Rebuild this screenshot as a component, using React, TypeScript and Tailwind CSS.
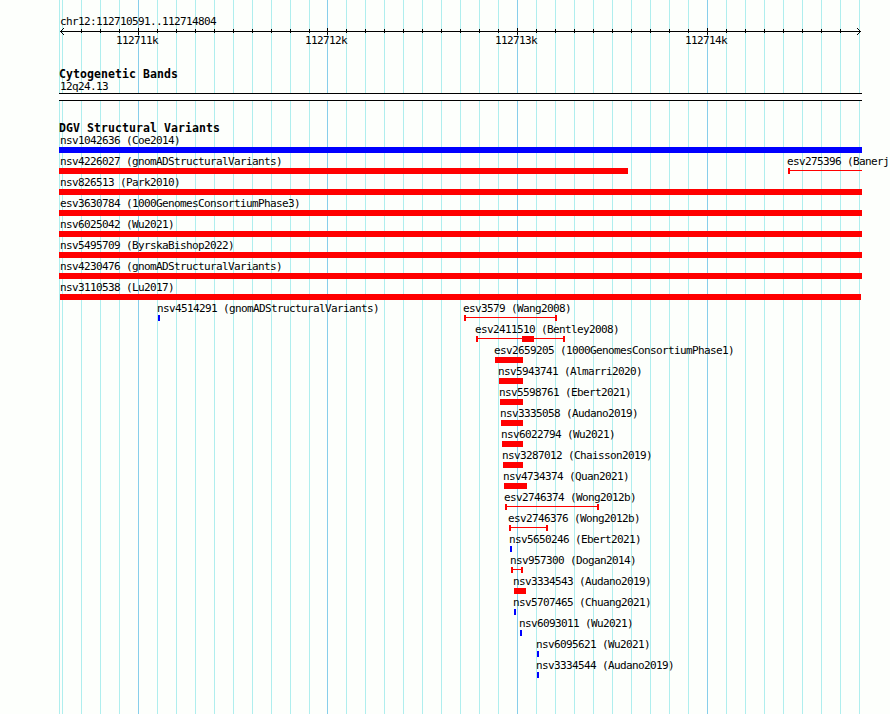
type Glyph = { x: number; w: number; kind: "bar" | "range"; color: "red" | "blue"; open?: boolean; block?: [number, number] };
type Item = Glyph & { label: string; tx: number };

const bar = (label: string, tx: number, x: number, end: number, color: "red" | "blue" = "red"): Item => ({ label, tx, x, w: end - x, kind: "bar", color });
const range = (label: string, tx: number, x: number, end: number, extra: Partial<Item> = {}): Item => ({ label, tx, x, w: end - x, kind: "range", color: "red", ...extra });

const rows: Item[][] = [
  [bar("nsv1042636 (Coe2014)", 60, 59, 862, "blue")],
  [bar("nsv4226027 (gnomADStructuralVariants)", 60, 59, 628), range("esv275396 (Banerj", 787, 788, 862, { open: true })],
  [bar("nsv826513 (Park2010)", 60, 59, 862)],
  [bar("esv3630784 (1000GenomesConsortiumPhase3)", 60, 59, 862)],
  [bar("nsv6025042 (Wu2021)", 60, 59, 862)],
  [bar("nsv5495709 (ByrskaBishop2022)", 60, 59, 862)],
  [bar("nsv4230476 (gnomADStructuralVariants)", 60, 59, 862)],
  [bar("nsv3110538 (Lu2017)", 60, 60, 861)],
  [bar("nsv4514291 (gnomADStructuralVariants)", 157, 158, 160, "blue"), range("esv3579 (Wang2008)", 463, 464, 557)],
  [range("esv2411510 (Bentley2008)", 475, 476, 565, { block: [522, 534] })],
  [bar("esv2659205 (1000GenomesConsortiumPhase1)", 494, 495, 523)],
  [bar("nsv5943741 (Almarri2020)", 498, 499, 523)],
  [bar("nsv5598761 (Ebert2021)", 499, 500, 523)],
  [bar("nsv3335058 (Audano2019)", 500, 501, 523)],
  [bar("nsv6022794 (Wu2021)", 501, 502, 523)],
  [bar("nsv3287012 (Chaisson2019)", 502, 503, 523)],
  [bar("nsv4734374 (Quan2021)", 503, 504, 527)],
  [range("esv2746374 (Wong2012b)", 504, 505, 599)],
  [range("esv2746376 (Wong2012b)", 508, 509, 548)],
  [bar("nsv5650246 (Ebert2021)", 509, 510, 512, "blue")],
  [range("nsv957300 (Dogan2014)", 510, 511, 523)],
  [bar("nsv3334543 (Audano2019)", 513, 514, 526)],
  [bar("nsv5707465 (Chuang2021)", 513, 514, 516, "blue")],
  [bar("nsv6093011 (Wu2021)", 519, 520, 522, "blue")],
  [bar("nsv6095621 (Wu2021)", 536, 537, 539, "blue")],
  [bar("nsv3334544 (Audano2019)", 536, 537, 539, "blue")],
];

const majors = [138, 327, 517, 707];
const minors = [
  62, 81, 100, 119, 157, 176, 195, 214, 233, 252, 271, 290, 309, 346, 365, 384, 403, 422, 441, 460, 479, 498,
  536, 555, 574, 593, 612, 631, 650, 669, 688, 726, 745, 764, 783, 802, 821, 840, 859,
];
const scale = [
  { t: "112711k", x: 116 },
  { t: "112712k", x: 305 },
  { t: "112713k", x: 495 },
  { t: "112714k", x: 685 },
];

const label = "block h-[14px] whitespace-pre text-[11px] leading-[16px] tracking-[-0.622px]";
const heading = "h-[14px] whitespace-pre pl-[59px] text-[11.5px] font-bold leading-[14px] tracking-[0.077px]";

function Mark({ g }: { g: Glyph }) {
  if (g.kind === "bar")
    return <div className={`h-[6px] ${g.color === "red" ? "bg-[#ff0000]" : "bg-[#0000ff]"}`} style={{ width: g.w }} />;
  return (
    <div className="flex h-[6px] items-start" style={{ width: g.w }}>
      <div className="h-[6px] w-[2px] bg-[#ff0000]" />
      <div className="mt-[2px] h-px flex-1 bg-[#ff0000]" />
      {g.block && (
        <>
          <div className="h-[6px] bg-[#ff0000]" style={{ width: g.block[1] - g.block[0] }} />
          <div className="mt-[2px] h-px bg-[#ff0000]" style={{ width: g.x + g.w - 2 - g.block[1] }} />
        </>
      )}
      {!g.open && <div className="h-[6px] w-[2px] bg-[#ff0000]" />}
    </div>
  );
}

function Row({ items }: { items: Item[] }) {
  return (
    <div className="grid h-[21px]">
      {items.map((it) => (
        <div key={it.label} className="col-start-1 row-start-1">
          <span className={label} style={{ marginLeft: it.tx }}>{it.label}</span>
          <div style={{ marginLeft: it.x }}>
            <Mark g={it} />
          </div>
        </div>
      ))}
    </div>
  );
}

function Gridlines() {
  return (
    <svg className="absolute inset-0" width="890" height="714" shapeRendering="crispEdges">
      {[59, ...minors].map((x) => <rect key={x} x={x} y="0" width="1" height="714" fill="#afeeee" />)}
      {majors.map((x) => <rect key={x} x={x} y="0" width="1" height="714" fill="#87ceeb" />)}
    </svg>
  );
}

function Ruler() {
  return (
    <svg className="block" width="890" height="8" viewBox="0 27 890 8" shapeRendering="crispEdges">
      <rect x="60" y="31" width="801" height="1" />
      {minors.filter((x) => x > 62 && x < 859).map((x) => <rect key={x} x={x} y="29" width="1" height="4" />)}
      {majors.map((x) => <rect key={x} x={x} y="28" width="1" height="7" />)}
      {[1, 2, 3].map((d) => (
        <g key={d}>
          <rect x={60 + d} y={31 - d} width="1" height="1" />
          <rect x={60 + d} y={31 + d} width="1" height="1" />
          <rect x={860 - d} y={31 - d} width="1" height="1" />
          <rect x={860 - d} y={31 + d} width="1" height="1" />
        </g>
      ))}
    </svg>
  );
}

export default function App() {
  return (
    <div className="relative h-[714px] w-[890px] overflow-hidden bg-[#fdfffc] font-['DejaVu_Sans_Mono',monospace] text-black">
      <Gridlines />
      <div className="relative flex flex-col pt-[14px]">
        <div className={`${label} mb-[-1px] pl-[60px]`}>chr12:112710591..112714804</div>
        <Ruler />
        <div className="grid h-[14px] -mt-[2px]">
          {scale.map((s) => (
            <span key={s.t} className={`${label} col-start-1 row-start-1`} style={{ marginLeft: s.x }}>{s.t}</span>
          ))}
        </div>
        <div className={`${heading} mt-[20px]`}>Cytogenetic Bands</div>
        <div className={`${label} mt-[-2px] pl-[60px]`}>12q24.13</div>
        <div className="ml-[59px] h-[8px] w-[803px] border-y border-black bg-white" />
        <div className={`${heading} mt-[20px]`}>DGV Structural Variants</div>
        <div className="-mt-[2px] flex flex-col">
          {rows.map((r) => <Row key={r[0].label} items={r} />)}
        </div>
      </div>
    </div>
  );
}
